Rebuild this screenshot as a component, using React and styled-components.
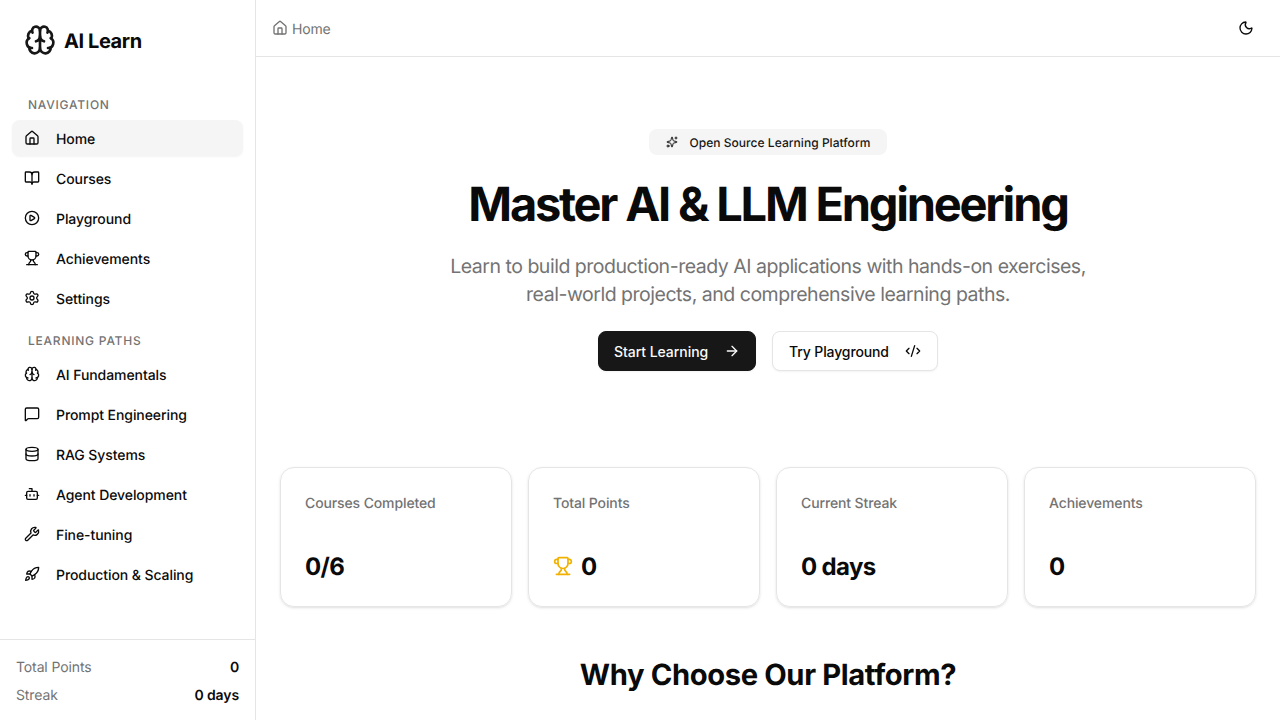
import React from "react";
import styled, { createGlobalStyle } from "styled-components";
import { Brain, House, BookOpen, CirclePlay, Trophy, Settings, MessageSquare, Database, Bot, Wrench, Rocket, Moon, Sparkles, ArrowRight, CodeXml } from "lucide-react";

const GlobalStyle = createGlobalStyle`
  *, *::before, *::after { box-sizing: border-box; }
  body {
    margin: 0;
    height: 720px;
    overflow: hidden;
    background: #fff;
    color: #0a0a0a;
    font-family: Inter, "Liberation Sans", sans-serif;
    font-size: 16px;
    line-height: 24px;
    text-rendering: geometricPrecision;
  }
  h1, h2, p { margin: 0; }
  button { font-family: inherit; color: inherit; border: 0; background: none; padding: 0; }
`;

const Page = styled.div`
  display: flex;
  height: 720px;
  overflow: hidden;
`;

const Sidebar = styled.aside`
  display: flex;
  flex-direction: column;
  width: 256px;
  flex: none;
  border-right: 1px solid #e5e5e5;
`;

const Brand = styled.div`
  display: flex;
  align-items: flex-start;
  gap: 8px;
  padding: 24px 24px 0;
  height: 88px;
  font-size: 20px;
  font-weight: 650;
  line-height: 34px;
  letter-spacing: -0.42px;
`;

const SideNav = styled.nav`
  flex: 1;
  padding: 0 12px;
`;

const NavGroup = styled.section`
  display: flex;
  flex-direction: column;
  gap: 4px;
  margin-bottom: 8px;
`;

const GroupTitle = styled.div`
  height: 32px;
  margin-bottom: -4px;
  padding: 9px 16px 7px;
  font-size: 12px;
  font-weight: 500;
  line-height: 16px;
  letter-spacing: 0.77px;
  color: #737373;
`;

const NavItem = styled.a`
  display: flex;
  align-items: center;
  gap: 16px;
  height: 36px;
  padding: 0 12px;
  border-radius: 8px;
  font-size: 14px;
  font-weight: 500;
  line-height: 20px;
  letter-spacing: -0.08px;
  background: ${(p) => (p.$active ? "#f5f5f5" : "transparent")};
  box-shadow: ${(p) => (p.$active ? "0 1px 2px rgba(0,0,0,.05)" : "none")};
  span { padding-top: 3px; }
`;

const Summary = styled.footer`
  display: flex;
  flex-direction: column;
  gap: 8px;
  height: 81px;
  padding: 18px 16px 15px;
  border-top: 1px solid #e5e5e5;
`;

const SummaryRow = styled.div`
  display: flex;
  justify-content: space-between;
  font-size: 14px;
  line-height: 20px;
  letter-spacing: -0.12px;
  color: #737373;
  strong { font-weight: 600; color: #0a0a0a; }
`;

const Main = styled.main`
  flex: 1;
  min-width: 0;
`;

const TopBar = styled.header`
  display: flex;
  align-items: center;
  justify-content: space-between;
  height: 57px;
  padding: 0 26px 0 16px;
  border-bottom: 1px solid #e5e5e5;
`;

const Crumb = styled.div`
  display: flex;
  align-items: center;
  gap: 4px;
  height: 24px;
  font-size: 14px;
  line-height: 20px;
  letter-spacing: -0.15px;
  color: #737373;
  span { padding-top: 3px; }
`;

const Content = styled.div`
  padding: 0 24px;
`;

const Hero = styled.section`
  display: flex;
  flex-direction: column;
  align-items: center;
  padding-top: 72px;
  height: 410px;
  text-align: center;
`;

const Badge = styled.div`
  display: flex;
  align-items: center;
  gap: 11.5px;
  width: 238px;
  height: 26px;
  padding: 0 16px 0 17px;
  border-radius: 8px;
  background: #f5f5f5;
  color: #171717;
  font-size: 12px;
  font-weight: 500;
  line-height: 16px;
  letter-spacing: 0.04px;
  white-space: nowrap;
  span { padding-top: 1px; }
`;

const Title = styled.h1`
  margin-top: 26px;
  font-size: 47px;
  font-weight: 700;
  line-height: 48px;
  letter-spacing: -2.22px;
`;

const Lead = styled.p`
  width: 672px;
  margin-top: 23px;
  font-size: 19.5px;
  line-height: 28px;
  letter-spacing: -0.48px;
  color: #737373;
`;

const Actions = styled.div`
  display: flex;
  gap: 16px;
  margin-top: 23px;
`;

const Button = styled.button`
  display: flex;
  align-items: center;
  justify-content: space-between;
  width: ${(p) => (p.$primary ? 158 : 166)}px;
  height: 40px;
  padding: 0 ${(p) => (p.$primary ? 15 : 16)}px;
  border-radius: 8px;
  border: 1px solid ${(p) => (p.$primary ? "#171717" : "#e5e5e5")};
  background: ${(p) => (p.$primary ? "#171717" : "#fff")};
  color: ${(p) => (p.$primary ? "#fafafa" : "#0a0a0a")};
  box-shadow: 0 1px 2px rgba(0, 0, 0, 0.05);
  font-size: 14px;
  font-weight: 500;
  line-height: 20px;
  letter-spacing: ${(p) => (p.$primary ? -0.05 : -0.12)}px;
  span { padding-top: 2px; }
`;

const Stats = styled.section`
  display: grid;
  grid-template-columns: repeat(4, 1fr);
  gap: 16px;
`;

const Card = styled.article`
  display: flex;
  flex-direction: column;
  justify-content: space-between;
  height: 140px;
  padding: 26px 24px 24px;
  border: 1px solid #e5e5e5;
  border-radius: 14px;
  box-shadow: 0 1px 3px rgba(0, 0, 0, 0.1), 0 1px 2px -1px rgba(0, 0, 0, 0.1);
`;

const CardLabel = styled.div`
  font-size: 14px;
  font-weight: 500;
  line-height: 20px;
  letter-spacing: -0.12px;
  color: #737373;
`;

const CardValue = styled.div`
  display: flex;
  align-items: center;
  gap: 8px;
  font-size: 24px;
  font-weight: 700;
  line-height: 30px;
  letter-spacing: -0.65px;
  span { padding-top: 2px; }
`;

const SectionTitle = styled.h2`
  margin-top: 51px;
  text-align: center;
  font-size: 29.2px;
  font-weight: 700;
  line-height: 36px;
  letter-spacing: -0.38px;
`;

const groups = [
  { title: "NAVIGATION", items: [["Home", House], ["Courses", BookOpen], ["Playground", CirclePlay], ["Achievements", Trophy], ["Settings", Settings]] },
  { title: "LEARNING PATHS", items: [["AI Fundamentals", Brain], ["Prompt Engineering", MessageSquare], ["RAG Systems", Database], ["Agent Development", Bot], ["Fine-tuning", Wrench], ["Production & Scaling", Rocket]] },
];

const stats = [["Courses Completed", "0/6"], ["Total Points", "0", true], ["Current Streak", "0 days"], ["Achievements", "0"]];

export default function App() {
  return (
    <Page>
      <GlobalStyle />
      <Sidebar>
        <Brand><Brain size={32} color="#171717" />AI Learn</Brand>
        <SideNav>
          {groups.map((g) => (
            <NavGroup key={g.title}>
              <GroupTitle>{g.title}</GroupTitle>
              {g.items.map(([label, Icon]) => (
                <NavItem key={label} $active={label === "Home"}><Icon size={16} /><span>{label}</span></NavItem>
              ))}
            </NavGroup>
          ))}
        </SideNav>
        <Summary>
          <SummaryRow><span>Total Points</span><strong>0</strong></SummaryRow>
          <SummaryRow><span>Streak</span><strong>0 days</strong></SummaryRow>
        </Summary>
      </Sidebar>
      <Main>
        <TopBar>
          <Crumb><House size={16} /><span>Home</span></Crumb>
          <Moon size={16} />
        </TopBar>
        <Content>
          <Hero>
            <Badge><Sparkles size={12} /><span>Open Source Learning Platform</span></Badge>
            <Title>Master AI & LLM Engineering</Title>
            <Lead>Learn to build production-ready AI applications with hands-on exercises, real-world projects, and comprehensive learning paths.</Lead>
            <Actions>
              <Button $primary><span>Start Learning</span><ArrowRight size={16} /></Button>
              <Button><span>Try Playground</span><CodeXml size={16} /></Button>
            </Actions>
          </Hero>
          <Stats>
            {stats.map(([label, value, trophy]) => (
              <Card key={label}>
                <CardLabel>{label}</CardLabel>
                <CardValue>{trophy && <Trophy size={20} color="#f0b100" />}<span>{value}</span></CardValue>
              </Card>
            ))}
          </Stats>
          <SectionTitle>Why Choose Our Platform?</SectionTitle>
        </Content>
      </Main>
    </Page>
  );
}
